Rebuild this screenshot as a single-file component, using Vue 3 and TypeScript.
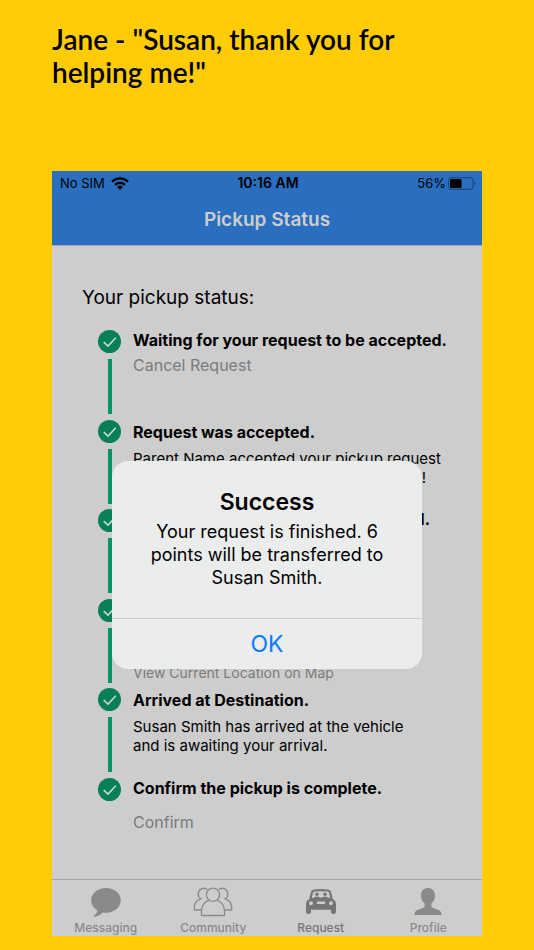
<script setup lang="ts">
import { ref } from 'vue'

interface Step {
  title: string
  body?: string[]
  action?: string
  actionStyle?: 'tight' | 'small' | 'spaced'
}

const steps: Step[] = [
  { title: 'Waiting for your request to be accepted.', action: 'Cancel Request', actionStyle: 'tight' },
  {
    title: 'Request was accepted.',
    body: ['Parent Name accepted your pickup request', 'and is on the way to the pickup lane now!'],
  },
  { title: 'Susan Smith is coming to your school.' },
  { title: 'Pickup in progress.', action: 'View Current Location on Map', actionStyle: 'small' },
  {
    title: 'Arrived at Destination.',
    body: ['Susan Smith has arrived at the vehicle', 'and is awaiting your arrival.'],
  },
  { title: 'Confirm the pickup is complete.', action: 'Confirm', actionStyle: 'spaced' },
]

type TabId = 'messaging' | 'community' | 'request' | 'profile'
const tabs: { id: TabId; label: string }[] = [
  { id: 'messaging', label: 'Messaging' },
  { id: 'community', label: 'Community' },
  { id: 'request', label: 'Request' },
  { id: 'profile', label: 'Profile' },
]
const activeTab = ref<TabId>('request')
const alertOpen = ref(true)
</script>

<template>
  <div class="page">
    <h1 class="caption">Jane - "Susan, thank you for helping me!"</h1>

    <main class="phone">
      <header class="top">
        <div class="status">
          <span class="carrier">
            No SIM
            <svg class="wifi" viewBox="0 0 18 13" aria-hidden="true">
              <g fill="none" stroke="#000" stroke-width="2.3">
                <path d="M1 4.7a11.4 11.4 0 0 1 16 0" />
                <path d="M4 7.9a7.2 7.2 0 0 1 10 0" />
              </g>
              <path d="M9 12.8 6.1 9.900a4.1 4.1 0 0 1 5.8 0z" />
            </svg>
          </span>
          <span class="clock">10:16 AM</span>
          <span class="power">
            56%
            <svg class="battery" viewBox="0 0 28 13" aria-hidden="true">
              <rect x="0.6" y="0.6" width="24.400" height="11.800" rx="3" fill="none" stroke="#1c4a80" stroke-width="1.100" />
              <rect x="2" y="2" width="11.600" height="9" rx="1.600" />
              <path d="M26.300 4.500c1.600.5 1.600 3.500 0 4z" fill="#1c4a80" />
            </svg>
          </span>
        </div>
        <h2 class="nav-title">Pickup Status</h2>
      </header>

      <section class="content">
        <h3 class="lead">Your pickup status:</h3>
        <ol class="steps">
          <li v-for="step in steps" :key="step.title" class="step">
            <div class="marker">
              <svg class="check" viewBox="0 0 23 23" aria-hidden="true">
                <circle cx="11.500" cy="11.500" r="11.500" fill="#077f57" />
                <path d="M5.700 12.100 10 16.100 17.800 7.700" fill="none" stroke="#cdd8d3" stroke-width="1.500" />
              </svg>
              <span class="line"></span>
            </div>
            <div class="text" :class="{ detailed: step.body }">
              <h4 class="step-title">{{ step.title }}</h4>
              <p v-if="step.body" class="step-body">
                <span v-for="row in step.body" :key="row" class="row">{{ row }}</span>
              </p>
              <button v-if="step.action" type="button" class="action" :class="step.actionStyle">
                {{ step.action }}
              </button>
            </div>
          </li>
        </ol>
      </section>

      <nav class="tabs">
        <button
          v-for="tab in tabs"
          :key="tab.id"
          type="button"
          class="tab"
          :class="{ active: tab.id === activeTab }"
          @click="activeTab = tab.id"
        >
          <svg v-if="tab.id === 'messaging'" class="icon" viewBox="0 0 40 30" fill="currentColor" aria-hidden="true">
            <path d="M20 1C11.500 1 5.200 6.500 5.200 13.300c0 4.500 2.500 8 6.300 10.200-.4 2-1.600 3.800-3.600 5.100-.5.400-.2 1 .4.900 3.700-.2 6.500-1.900 8.300-4.100 1.100.2 2.200.3 3.400.3 8.500 0 14.800-5.500 14.800-12.400S28.500 1 20 1z" />
          </svg>
          <svg v-else-if="tab.id === 'community'" class="icon" viewBox="0 0 40 30" fill="none" stroke="currentColor" stroke-width="1.300" aria-hidden="true">
            <circle cx="20" cy="7.700" r="6.600" />
            <path d="M15.800 13.300C11.200 15 8.500 19 8.500 24.500v4h23v-4c0-5.500-2.700-9.500-7.300-11.200" />
            <path d="M14.300 2.600C10.500-.3 5.200 2 5.200 6.900c0 2.100 1 3.900 2.600 4.900C3.800 13 1.300 16.500 1.300 21v2h7.400" />
            <path d="M25.700 2.600c3.800-2.900 9.100-.6 9.100 4.300 0 2.100-1 3.900-2.600 4.900 4 1.200 6.500 4.700 6.500 9.200v2h-7.400" />
          </svg>
          <svg v-else-if="tab.id === 'request'" class="icon" viewBox="0 0 40 30" fill="currentColor" fill-rule="evenodd" aria-hidden="true">
            <path d="M12.200 2.700Q20 1.300 27.800 2.700q1.700.4 2.200 2.100l1.800 7.400q3.200 1.500 3.200 4.900v7.300a2.500 2.500 0 0 1-5 0V22.700H10v1.700a2.500 2.500 0 0 1-5 0V17.100q0-3.400 3.200-4.900l1.800-7.400q.5-1.700 2.200-2.100zM13.300 4.600q-1 .2-1.300 1.200L10.800 11.100q9.200-1.100 18.400 0L28 5.800q-.3-1-1.300-1.200-6.700-.8-13.400 0zM10 14.300a2 2 0 1 0 0 4 2 2 0 0 0 0-4zM30 14.300a2 2 0 1 0 0 4 2 2 0 0 0 0-4zM16.900 14.500a1.200 1.200 0 0 0 0 2.400h6.200a1.200 1.200 0 0 0 0-2.400z" />
            <circle cx="15.900" cy="7.300" r="1.800" />
            <circle cx="24.100" cy="7.300" r="1.800" />
            <path d="M12.700 11.200q.4-1.700 3.200-1.700t3.200 1.700zM20.900 11.200q.4-1.700 3.200-1.700t3.200 1.700z" />
          </svg>
          <svg v-else class="icon" viewBox="0 0 40 30" fill="currentColor" aria-hidden="true">
            <path d="M20 1c-4.300 0-7 3-7 7.500 0 3.300 1.300 6.200 3.500 8 .6 2.200.1 3.700-1.700 4.500l-4.600 1.700C7.500 23.700 6.400 25.200 6.400 28h27.200c0-2.800-1.100-4.300-3.800-5.300L25.200 21c-1.800-.8-2.300-2.300-1.700-4.500 2.200-1.800 3.500-4.700 3.500-8C27 4 24.300 1 20 1z" />
          </svg>
          <span class="tab-label">{{ tab.label }}</span>
        </button>
      </nav>

      <div v-if="alertOpen" class="overlay">
        <div class="alert" role="alertdialog" aria-labelledby="alert-title" aria-describedby="alert-message">
          <div class="alert-content">
            <h2 id="alert-title" class="alert-title">Success</h2>
            <p id="alert-message" class="alert-message">
              Your request is finished. 6 points will be transferred to Susan Smith.
            </p>
          </div>
          <button type="button" class="ok" @click="alertOpen = false">OK</button>
        </div>
      </div>
    </main>
  </div>
</template>

<style>
body {
  background: #ffcc05;
}
</style>

<style scoped>
.page {
  box-sizing: border-box;
  min-height: 100vh;
  display: flex;
  flex-direction: column;
  padding: 23px 52px 14px;
  background: #ffcc05;
  color: #000;
  font-family: Inter, 'Liberation Sans', sans-serif;
}

h1, h2, h3, h4, p, ol {
  margin: 0;
  padding: 0;
}

button {
  margin: 0;
  padding: 0;
  border: 0;
  background: none;
  font: inherit;
  color: inherit;
  cursor: pointer;
}

.caption {
  margin-bottom: 82px;
  max-width: 380px;
  font-family: Lato, 'Open Sans', sans-serif;
  font-size: 28px;
  line-height: 33px;
  font-weight: 600;
}

.phone {
  position: relative;
  flex: 1;
  display: flex;
  flex-direction: column;
  background: #cdcdcd;
}

.top {
  background: #2a6ebf;
  border-bottom: 1px solid #a9adb3;
}

.status {
  display: grid;
  grid-template-columns: 1fr auto 1fr;
  align-items: center;
  padding: 2px 6px 0 8px;
  font-size: 13px;
  line-height: 20px;
}

.carrier,
.power {
  display: flex;
  align-items: center;
  gap: 6px;
}

.power {
  justify-content: flex-end;
  gap: 2px;
}

.clock {
  font-size: 14px;
  font-weight: 600;
}

.wifi {
  width: 18px;
  height: 13px;
}

.battery {
  width: 28px;
  height: 13px;
}

.nav-title {
  padding: 14px 0 12px;
  text-align: center;
  font-size: 19px;
  line-height: 26px;
  font-weight: 600;
  color: #cdcdcd;
}

.content {
  flex: 1;
  padding: 40px 24px 0 30px;
}

.lead {
  font-size: 19px;
  line-height: 24px;
  font-weight: 400;
}

.steps {
  display: grid;
  grid-auto-rows: 1fr;
  min-height: 537px;
  margin-top: 20px;
  padding-left: 16px;
  list-style: none;
}

.step {
  display: flex;
  gap: 12px;
}

.marker {
  display: flex;
  flex-direction: column;
  align-items: center;
  gap: 6px;
  width: 23px;
}

.check {
  width: 23px;
  height: 23px;
}

.line {
  width: 4px;
  height: 55px;
  background: #069363;
}

.step:last-child .line {
  display: none;
}

.detailed {
  padding-top: 2px;
}

.step-title {
  font-size: 16px;
  line-height: 20px;
  font-weight: 700;
  white-space: nowrap;
}

.step-body {
  margin-top: 7px;
  font-size: 15px;
  line-height: 19px;
}

.row {
  display: block;
  white-space: nowrap;
}

.action {
  display: block;
  font-size: 16px;
  line-height: 20px;
  color: #7b7b7b;
}

.action.tight {
  margin-top: 5px;
}

.action.small {
  margin-top: 44px;
  font-size: 14px;
}

.action.spaced {
  margin-top: 14px;
}

.tabs {
  display: grid;
  grid-template-columns: repeat(4, 1fr);
  border-top: 1px solid #a6a6a6;
}

.tab {
  display: flex;
  flex-direction: column;
  align-items: center;
  gap: 3px;
  padding-top: 7px;
  color: #8a8a8a;
}

.tab.active {
  color: #757575;
}

.icon {
  width: 40px;
  height: 30px;
}

.tab-label {
  font-size: 12px;
  line-height: 16px;
  font-weight: 500;
}

.overlay {
  position: absolute;
  inset: 0;
  display: flex;
  align-items: center;
  justify-content: center;
  padding-top: 22px;
}

.alert {
  width: 72%;
  overflow: hidden;
  border-radius: 16px;
  background: #ebecec;
}

.alert-content {
  padding: 26px 28px 29px;
  text-align: center;
}

.alert-title {
  font-size: 23px;
  line-height: 30px;
  font-weight: 600;
}

.alert-message {
  margin-top: 3px;
  font-size: 18px;
  line-height: 23px;
}

.ok {
  width: 100%;
  border-top: 1px solid #cbcccc;
  font-size: 23px;
  line-height: 50px;
  color: #0a7bff;
}
</style>
